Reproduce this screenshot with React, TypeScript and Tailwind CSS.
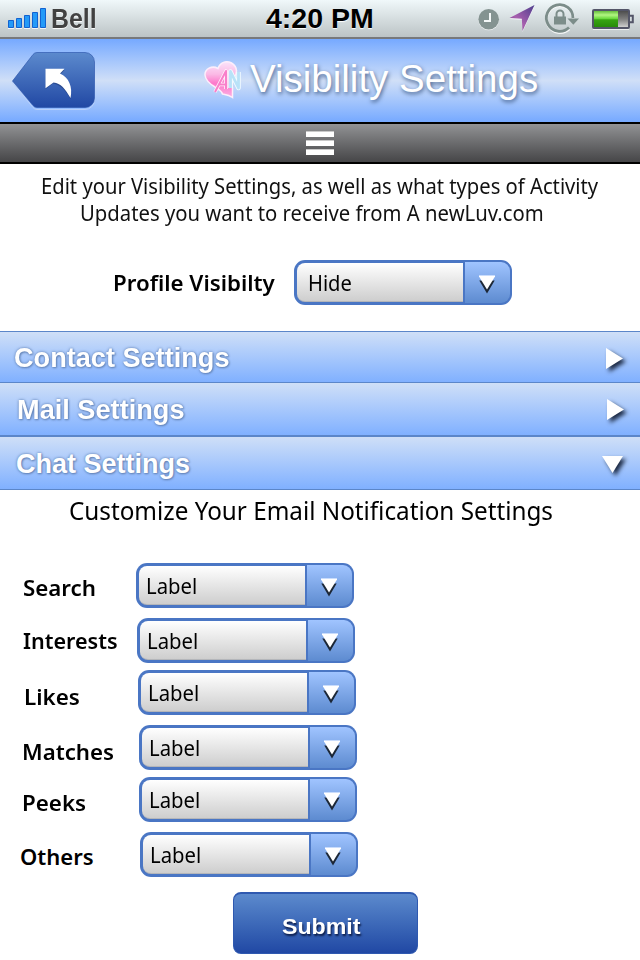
import { useLayoutEffect, useRef, useState } from 'react';
import type { ReactNode } from 'react';

/* Single line of text condensed or expanded to the width of its box. */
function Fit({ className, children }: { className: string; children: ReactNode }) {
  const box = useRef<HTMLDivElement>(null);
  const text = useRef<HTMLSpanElement>(null);
  const [scale, setScale] = useState(1);
  useLayoutEffect(() => {
    if (box.current && text.current) {
      setScale(box.current.getBoundingClientRect().width / text.current.offsetWidth);
    }
  }, []);
  return (
    <div ref={box} className={`shrink-0 whitespace-nowrap ${className}`}>
      <span ref={text} className="inline-block origin-left" style={{ transform: `scaleX(${scale})` }}>
        {children}
      </span>
    </div>
  );
}

function Select({ value, text }: { value: string; text: string }) {
  return (
    <div className="flex h-[45px] w-[218px] shrink-0 overflow-hidden rounded-[11px] bg-[#4a76c4]">
      <div className="my-[3px] ml-[3px] h-[39px] w-[166px] rounded-l-[8px] border-b border-[#b4b6ba] bg-linear-to-b from-white to-[#cecece]">
        <Fit className={`mt-[5px] text-[21.500px] leading-[30px] ${text}`}>{value}</Fit>
      </div>
      <div className="my-[2px] mr-[2px] ml-[2px] h-[41px] w-[45px] rounded-r-[9px] bg-linear-to-b from-[#a0c4ff] to-[#5d8bd0] pt-[13px] pl-[13px]">
        <svg width="18" height="20" viewBox="0 0 18 20">
          <path d="M1.300 5.500h15.400L9 18.500z" fill="#1c2736" />
          <path d="M1 0h16v1.500L9 14.500 1 1.500z" fill="#fff" />
          <path d="M1 0h16v1H1z" fill="#c9dcfc" />
        </svg>
      </div>
    </div>
  );
}

const sections = [
  { title: 'Contact Settings', row: 'h-[51px] pl-[14px] pr-[15px]', width: 'w-[216px] mt-[10px]', open: false, arrow: 'mt-[15px]' },
  { title: 'Mail Settings', row: 'h-[53px] pl-[17px] pr-[14px]', width: 'w-[168px] mt-[11px]', open: false, arrow: 'mt-[15px]' },
  { title: 'Chat Settings', row: 'h-[55px] border-t-2 pl-[16px] pr-[15px] border-b', width: 'w-[174px] mt-[11px]', open: true, arrow: 'mt-[18px]' },
];

const fields = [
  { label: 'Search', row: 'h-[55px] pl-[23px]', text: 'w-[73px] mt-[9px]', gap: 'ml-[40px]' },
  { label: 'Interests', row: 'h-[52px] pl-[23px]', text: 'w-[95px] mt-[7px]', gap: 'ml-[19px]' },
  { label: 'Likes', row: 'h-[55px] pl-[24px]', text: 'w-[56px] mt-[11px]', gap: 'ml-[58px]' },
  { label: 'Matches', row: 'h-[52px] pl-[22px]', text: 'w-[92px] mt-[11px]', gap: 'ml-[25px]' },
  { label: 'Peeks', row: 'h-[55px] pl-[22px]', text: 'w-[64px] mt-[10px]', gap: 'ml-[53px]' },
  { label: 'Others', row: 'h-[60px] pl-[20px]', text: 'w-[74px] mt-[9px]', gap: 'ml-[46px]' },
];

function StatusBar() {
  return (
    <div className="flex h-[39px] border-b-2 border-[#77797c] bg-linear-to-b from-[#f0f8fa] to-[#bcc4c6] pl-[8px] font-['Liberation_Sans',Arial,sans-serif] font-bold">
      <svg className="mt-[7px] shrink-0" width="40" height="22" viewBox="0 0 40 22">
        <g fill="#239af8" stroke="#1262d0">
          <path d="M.5 13.500h5v7h-5zM8.500 11.500h5v9h-5zM16.500 8.500h5v12h-5zM24.500 5.500h5v15h-5zM32.500 1.500h5v19h-5z" />
        </g>
        <path d="M0 21.500h6M8 21.500h6M16 21.500h6M24 21.500h6M32 21.500h6" stroke="#fff" opacity=".8" />
      </svg>
      <Fit className="ml-[3px] mt-[4px] w-[46px] text-[27px] leading-[30px] text-[#414141] [text-shadow:0_1px_1px_#fff]">Bell</Fit>
      <Fit className="ml-[169px] mt-[3px] w-[108px] text-[28.500px] leading-[30px] text-black [text-shadow:0_1px_1px_#fff]">4:20 PM</Fit>
      <svg className="ml-[103px] shrink-0" width="160" height="37" viewBox="477 0 160 37">
        <defs>
          <linearGradient id="nav" x1="1" y1="0" x2="0" y2="1">
            <stop offset="0" stopColor="#4c3d8c" />
            <stop offset=".6" stopColor="#a75fae" />
            <stop offset="1" stopColor="#6d3b86" />
          </linearGradient>
          <linearGradient id="charge" x1="0" y1="0" x2="0" y2="1">
            <stop offset="0" stopColor="#65bd3d" />
            <stop offset=".25" stopColor="#b2f582" />
            <stop offset=".48" stopColor="#69d83c" />
            <stop offset=".55" stopColor="#37a411" />
            <stop offset="1" stopColor="#288b09" />
          </linearGradient>
          <linearGradient id="empty" x1="0" y1="0" x2="0" y2="1">
            <stop offset="0" stopColor="#4d4d4d" />
            <stop offset=".5" stopColor="#7e7e7e" />
            <stop offset="1" stopColor="#cfcfcf" />
          </linearGradient>
        </defs>
        <circle cx="488.700" cy="20" r="10.300" fill="#fff" opacity=".7" />
        <circle cx="488.700" cy="19.200" r="10.300" fill="#849391" />
        <path d="M490 13v8h-6" fill="none" stroke="#f4f8f8" strokeWidth="2" />
        <path d="M534.500 6 522.500 32l-.7-12.300L509.500 19z" fill="#fff" opacity=".8" />
        <path d="M534.500 5 522.500 31l-.7-12.300L509.500 18z" fill="url(#nav)" />
        <path d="M569.300 29a13.500 13.500 0 1 1 4.200-9.500" fill="none" stroke="#fff" strokeWidth="2.600" opacity=".8" />
        <path d="M569 27.500a13.300 13.300 0 1 1 4-9.500" fill="none" stroke="#7c8d8a" strokeWidth="2.800" />
        <path d="M567.500 18.500h11.500l-5.700 6.200z" fill="#7c8d8a" />
        <path d="M554 16.500h12v8h-12z" fill="#7c8d8a" />
        <path d="M556.500 17v-3a3.500 3.500 0 0 1 7 0v3" fill="none" stroke="#7c8d8a" strokeWidth="2" />
        <path d="M593 29.500h36" stroke="#fff" opacity=".7" />
        <rect x="593" y="10" width="36" height="18" rx="1" fill="none" stroke="#535568" strokeWidth="2" />
        <path d="M594 11h24v16h-24z" fill="url(#charge)" />
        <path d="M618 11h10v16h-10z" fill="url(#empty)" />
        <path d="M630 15.800h2.800v6.500H630" fill="none" stroke="#535568" strokeWidth="2" />
      </svg>
    </div>
  );
}

function Logo() {
  return (
    <svg className="mt-[21px] shrink-0" width="40" height="40" viewBox="203 60 40 40">
      <defs>
        <linearGradient id="heart" x1="0" y1="0" x2="0" y2="1">
          <stop offset="0" stopColor="#fbe4fa" />
          <stop offset=".35" stopColor="#fbb9e5" />
          <stop offset=".6" stopColor="#fd79cb" />
          <stop offset="1" stopColor="#fcb0e2" />
        </linearGradient>
      </defs>
      <path
        d="M218 68.500c2-6 8-8.500 13.500-5.500 5.500 3.500 6 9 3 14.500-2 4-3 6-2 10.500v9.500c-4-3-7-3-10-3.500-1-3.500-4-4.500-7.500-7-5-3-9.500-6.500-10-12-.3-6 7-10 13-6.500z"
        fill="url(#heart)"
        stroke="#fdeefb"
        strokeWidth="1.500"
      />
      <g fill="none" strokeLinejoin="round">
        <path d="M215 92l11-21v18M219 84.500h8" stroke="#fff2fb" strokeWidth="3.600" />
        <path d="M215 92l11-21v18M219 84.500h8" stroke="#f97fca" strokeWidth="2" />
        <path d="M230.500 88V71.500L238.500 88V72" stroke="#f2fbff" strokeWidth="4.500" />
        <path d="M230.500 88V71.500L238.500 88V72" stroke="#b9e2f8" strokeWidth="2.800" />
      </g>
    </svg>
  );
}

export default function App() {
  return (
    <div className="flex h-[960px] w-[640px] flex-col overflow-hidden bg-white font-['Noto_Sans','Open_Sans',sans-serif] text-black">
      <StatusBar />
      <header className="flex h-[85px] shrink-0 border-b-2 border-black bg-linear-to-b from-[#76a9ff] via-[#d0dff7] to-[#76a9ff] pl-[11px]">
        <svg className="mt-[12px] shrink-0" width="86" height="60" viewBox="11 51 86 60">
          <defs>
            <linearGradient id="back" x1="0" y1="0" x2="0" y2="1">
              <stop offset="0" stopColor="#5c8acd" />
              <stop offset="1" stopColor="#2148a4" />
            </linearGradient>
          </defs>
          <path d="M37 53.500h48a9.500 9.500 0 0 1 9.500 9.500v37a9.500 9.500 0 0 1-9.500 9.500H37q-2.500 0-4-2L12 82l21-26.500q1.500-2 4-2z" fill="none" stroke="#b8d0fa" />
          <path d="M37 52.500h48a9.500 9.500 0 0 1 9.500 9.500v36a9.500 9.500 0 0 1-9.500 9.500H37q-2.500 0-4-2L12.500 81 33 54.500q1.500-2 4-2z" fill="url(#back)" stroke="#2b55aa" strokeOpacity=".65" />
          <path d="M45.700 70h18.800l-4.300 4.800C69 79 73 88 70.500 99 66 91 61 85 53 83.500L45.700 89z" fill="#14285c" opacity=".4" />
          <path d="M45.500 68.700h19L60 73.500C69 77.500 73 87 70.500 98 65 88.500 61 83.500 53.500 82.500L45.500 88.200z" fill="#fff" />
        </svg>
        <div className="w-[106px] shrink-0" />
        <Logo />
        <Fit className="ml-[7px] mt-[17px] w-[288px] font-['Liberation_Sans',Arial,sans-serif] text-[38.500px] leading-[46px] text-white [text-shadow:1px_2px_4px_#44608c]">
          Visibility Settings
        </Fit>
      </header>
      <div className="flex h-[40px] shrink-0 flex-col items-center gap-[3px] border-b-2 border-black bg-linear-to-b from-[#929395] to-[#464648] pt-[7px]">
        <div className="h-[6px] w-[28px] border-t border-[#c9c9c9] bg-white" />
        <div className="h-[6px] w-[28px] border-t border-[#c9c9c9] bg-white" />
        <div className="h-[6px] w-[28px] border-t border-[#c9c9c9] bg-white" />
      </div>

      <div className="h-[97px] shrink-0 pt-[8px] text-[21.500px] leading-[27px] text-[#111]">
        <Fit className="ml-[41px] w-[557px]">Edit your Visibility Settings, as well as what types of Activity</Fit>
        <Fit className="ml-[80px] w-[464px]">Updates you want to receive from A newLuv.com</Fit>
      </div>
      <div className="flex h-[70px] shrink-0 pl-[113px]">
        <Fit className="mt-[6px] w-[162px] text-[22px] leading-[30px] font-semibold">Profile Visibilty</Fit>
        <div className="ml-[19px] -mt-px">
          <Select value="Hide" text="ml-[11px] w-[44px]" />
        </div>
      </div>

      {sections.map((s) => (
        <div
          key={s.title}
          className={`flex shrink-0 justify-between border-t border-[#5b86c9] bg-linear-to-b from-[#cfdff7] to-[#80b0ff] font-['Liberation_Sans',Arial,sans-serif] ${s.row}`}
        >
          <Fit className={`text-[27px] leading-[32px] font-bold text-white [text-shadow:0_0_3px_#5878ac,1px_1px_2px_#6c8cc0] ${s.width}`}>
            {s.title}
          </Fit>
          <svg className={`shrink-0 overflow-visible drop-shadow-[3px_3px_2px_#1c2a44] ${s.arrow}`} width={s.open ? 23 : 19} height="22">
            <path d={s.open ? 'M0 1h21L10.500 18z' : 'M0 1l17 10.500L0 22z'} fill="#fff" />
          </svg>
        </div>
      ))}

      <Fit className="ml-[69px] mt-[5px] h-[68px] w-[484px] text-[24.500px] leading-[32px]">Customize Your Email Notification Settings</Fit>

      {fields.map((f) => (
        <div key={f.label} className={`flex shrink-0 ${f.row}`}>
          <Fit className={`text-[22px] leading-[30px] font-semibold ${f.text}`}>{f.label}</Fit>
          <div className={f.gap}>
            <Select value="Label" text="ml-[7px] w-[51px]" />
          </div>
        </div>
      ))}

      <button className="ml-[233px] flex h-[62px] w-[185px] shrink-0 rounded-[8px] border border-t-2 border-[#2f59b0] bg-linear-to-b from-[#5c8acd] to-[#2148a4] pl-[48px] font-['Liberation_Sans',Arial,sans-serif]">
        <Fit className="mt-[18px] w-[79px] text-left text-[22px] leading-[30px] font-bold text-white [text-shadow:1px_2px_2px_#0c1c48]">Submit</Fit>
      </button>
    </div>
  );
}
